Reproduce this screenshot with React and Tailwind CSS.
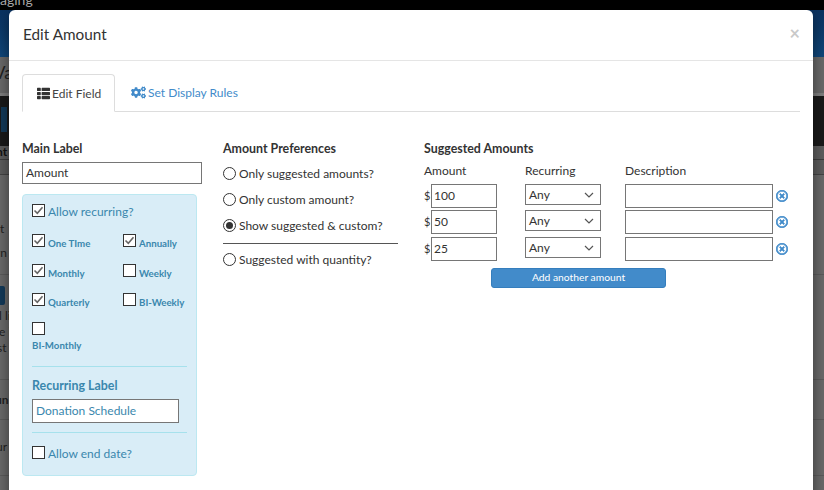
import React from "react";
import { FaThList, FaCogs, FaRegTimesCircle } from "react-icons/fa";

const font = { fontFamily: '"Lato", "Noto Sans", sans-serif' };

function Check({ on }) {
  return (
    <span className="flex w-[13px] h-[13px] shrink-0 border border-[#333] bg-white items-center justify-center">
      {on && (
        <svg width="11" height="11" viewBox="0 0 11 11" fill="none">
          <path d="M1.5 5.5 L4.3 8.3 L9.5 2.2" stroke="#666" strokeWidth="1.6" />
        </svg>
      )}
    </span>
  );
}

function Radio({ on }) {
  return (
    <span className="inline-flex w-[13px] h-[13px] shrink-0 rounded-full border border-[#333] bg-white items-center justify-center">
      {on && <span className="block w-[7px] h-[7px] rounded-full bg-[#333]" />}
    </span>
  );
}

function Opt({ on, label }) {
  return (
    <div className="flex items-start gap-[3px]">
      <Check on={on} />
      <span className="text-[9.7px] font-bold text-[#3a87ad] leading-none mt-[5px] whitespace-nowrap">{label}</span>
    </div>
  );
}

function RadioRow({ on, label }) {
  return (
    <div className="flex items-center gap-[3px] h-[26px] text-[12px] text-[#333] whitespace-nowrap">
      <Radio on={on} />
      <span className="mt-[2px]">{label}</span>
    </div>
  );
}

function Box({ className, children }) {
  return (
    <div className={`border border-[#767676] bg-white flex items-center text-[12px] text-[#333] ${className}`}>
      {children}
    </div>
  );
}

function Row({ amount, mt }) {
  return (
    <div className={`flex items-start ${mt}`}>
      <span className="w-[7px] text-[11px] text-[#333] leading-[24px]">$</span>
      <Box className="w-[66px] h-[24px] pl-[2px]">{amount}</Box>
      <Box className="w-[76px] h-[21px] ml-[28px] pl-[3px] justify-between pr-[6px]">
        <span>Any</span>
        <svg width="10" height="6" viewBox="0 0 10 6" fill="none">
          <path d="M1 1 L5 5 L9 1" stroke="#555" strokeWidth="1.2" />
        </svg>
      </Box>
      <Box className="w-[148px] h-[24px] ml-[24px]" />
      <FaRegTimesCircle className="ml-[3px] mt-[6px] w-[12px] h-[12px] text-[#428bca] stroke-[30]" />
    </div>
  );
}

function Background() {
  return (
    <div className="flex flex-col h-full text-[13px] text-[#222] overflow-hidden whitespace-nowrap" style={font}>
      <div className="h-[10px] bg-black text-[#aaa] text-[14px] leading-[0px] overflow-hidden">aging</div>
      <div className="h-[47px] bg-gradient-to-b from-[#0a3260] to-[#10487c]" />
      <div className="h-[36px] bg-[#6b6b6b] text-[17px] text-[#222] leading-[32px] -indent-[6px]">Va</div>
      <div className="h-[3px] bg-[#808080]" />
      <div className="h-[50px] bg-[#1a1a1a] pt-[11px]">
        <div className="w-[6px] h-[25px] ml-[1px] bg-[#133a5a]" />
      </div>
      <div className="h-[14px] bg-[#5e5e5e] border-b border-[#3e3e3e] text-[12px] text-[#111] leading-[12px] font-bold -indent-[4px]">nt</div>
      <div className="h-[15px] bg-[#5e5e5e] border-b border-[#454545]" />
      <div className="h-[100px] bg-[#6b6b6b] border-b border-[#5c5c5c] pt-[47px] text-[12px] leading-[14px]">
        <div>t</div>
        <div className="mt-[10px] -indent-[6px]">yn</div>
      </div>
      <div className="h-[105px] bg-[#6b6b6b] border-b border-[#5c5c5c] pt-[11px]">
        <div className="w-[5px] h-[19px] bg-[#133a5a] rounded-r-[2px]" />
        <div className="text-[12px] leading-[16px] mt-[3px] -indent-[1px]">
          <div>l li</div>
          <div>e i</div>
          <div className="-indent-[3px]">st</div>
        </div>
      </div>
      <div className="h-[40px] bg-[#6b6b6b] border-b border-[#5c5c5c] pt-[11px] text-[12px] font-bold -indent-[5px]">un</div>
      <div className="h-[56px] bg-[#6b6b6b] border-b border-[#5c5c5c] pt-[18px] text-[12px] -indent-[4px]">ur</div>
      <div className="flex-1 bg-[#6b6b6b]" />
    </div>
  );
}

export default function App() {
  return (
    <div className="relative w-[824px] h-[490px] overflow-hidden">
      <Background />
      <div
        className="absolute left-[9px] top-[10px] w-[804px] h-[520px] bg-white rounded-[6px] shadow-[0_5px_15px_rgba(0,0,0,0.5)] text-[#333]"
        style={font}
      >
        <div className="h-[51px] border-b border-[#e5e5e5] flex items-center justify-between pl-[14px] pr-[13px]">
          <span className="text-[15.3px] text-[#333] leading-none -mt-[1px]">Edit Amount</span>
          <span className="text-[#c9c9c9] text-[18px] font-bold leading-none -mt-[4px]">×</span>
        </div>

        <div className="mt-[13px] ml-[13px] mr-[13px] h-[38px] border-b border-[#ddd] flex items-start text-[12px]">
          <div className="w-[93px] h-[38px] bg-white border border-[#ddd] border-b-white rounded-t-[4px] flex items-center pl-[14px] gap-[2px] text-[#444]">
            <FaThList className="w-[13px] h-[13px] text-[#333]" />
            <span className="mt-[1px]">Edit Field</span>
          </div>
          <div className="h-[37px] flex items-center gap-[2px] ml-[16px] text-[#428bca]">
            <FaCogs className="w-[15px] h-[15px]" />
            <span className="mt-[1px]">Set Display Rules</span>
          </div>
        </div>

        <div className="flex items-start mt-[29px] ml-[13px]">
          <div className="w-[180px]">
            <div className="text-[12.4px] font-bold leading-[16px]">Main Label</div>
            <Box className="w-[180px] h-[22px] mt-[5px] pl-[3px]">Amount</Box>
            <div className="mt-[10px] w-[175px] h-[282px] bg-[#d9edf7] border border-[#bce8f1] rounded-[4px] px-[9px] pt-[9px] text-[#3a87ad]">
              <div className="flex items-start gap-[3px]">
                <Check on />
                <span className="text-[12px] leading-[16px]">Allow recurring?</span>
              </div>
              <div className="grid grid-cols-[91px_1fr] mt-[14px]">
                <div className="h-[30px]"><Opt on label="One TIme" /></div>
                <div className="h-[30px]"><Opt on label="Annually" /></div>
                <div className="h-[29px]"><Opt on label="Monthly" /></div>
                <div className="h-[29px]"><Opt label="Weekly" /></div>
                <div className="h-[29px]"><Opt on label="Quarterly" /></div>
                <div className="h-[29px]"><Opt label="BI-Weekly" /></div>
              </div>
              <Check />
              <div className="text-[9.7px] font-bold leading-none mt-[6px]">BI-Monthly</div>
              <div className="border-t border-[#a6e1ec] mt-[15px]" />
              <div className="text-[12.4px] font-bold leading-[16px] mt-[11px]">Recurring Label</div>
              <Box className="w-[147px] h-[24px] mt-[5px] pl-[3px] !text-[#3a87ad]">Donation Schedule</Box>
              <div className="border-t border-[#a6e1ec] mt-[9px]" />
              <div className="flex items-start gap-[3px] mt-[13px]">
                <Check />
                <span className="text-[12px] leading-[16px]">Allow end date?</span>
              </div>
            </div>
          </div>

          <div className="w-[175px] ml-[21px]">
            <div className="text-[12.4px] font-bold leading-[16px] mb-[3px]">Amount Preferences</div>
            <RadioRow label="Only suggested amounts?" />
            <RadioRow label="Only custom amount?" />
            <RadioRow on label="Show suggested & custom?" />
            <div className="border-t border-[#555] mt-[5px] mb-[2px]" />
            <RadioRow label="Suggested with quantity?" />
          </div>

          <div className="ml-[26px] w-[370px]">
            <div className="text-[12.4px] font-bold leading-[16px]">Suggested Amounts</div>
            <div className="flex text-[12px] leading-[16px] mt-[6px] mb-[5px]">
              <span className="w-[101px]">Amount</span>
              <span className="w-[100px]">Recurring</span>
              <span>Description</span>
            </div>
            <Row amount="100" />
            <Row amount="50" mt="mt-[2px]" />
            <Row amount="25" mt="mt-[3px]" />
            <div className="ml-[67px] mt-[7px] w-[175px] h-[20px] bg-[#428bca] border border-[#357ebd] rounded-[3px] text-white text-[10.3px] flex items-center justify-center">
              Add another amount
            </div>
          </div>
        </div>
      </div>
    </div>
  );
}
